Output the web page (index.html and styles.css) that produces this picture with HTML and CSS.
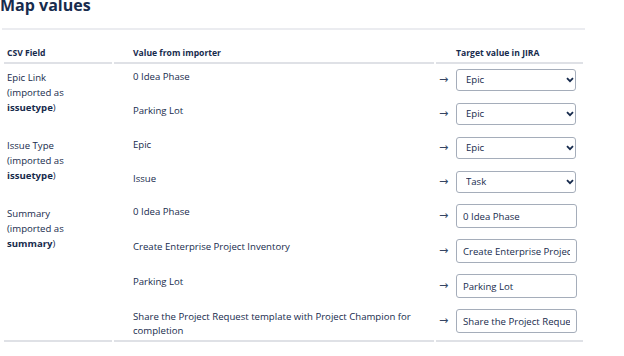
FILE: index.html
```html
<!DOCTYPE html>
<html lang="en">
<head>
    <meta charset="UTF-8">
    <title>Map values</title>
    <link rel="stylesheet" href="styles.css">
</head>
<body>
    <div class="page">
        <h1 class="title">Map values</h1>

        <table class="map">
            <colgroup>
                <col class="col-field">
                <col class="col-value">
                <col class="col-target">
            </colgroup>
            <thead>
                <tr>
                    <th>CSV Field</th>
                    <th class="th-value">Value from importer</th>
                    <th class="th-target">Target value in JIRA</th>
                </tr>
            </thead>
            <tbody>
                <!-- Epic Link -->
                <tr>
                    <td class="field" rowspan="2">Epic Link<br>(imported as<br><b>issuetype</b>)</td>
                    <td class="value">0 Idea Phase</td>
                    <td class="target">
                        <div class="map-to"><span class="arrow">&rarr;</span><span class="pick"><select><option>Epic</option></select><svg class="chev" viewBox="0 0 8 6" width="8" height="6"><path d="M1 1.2 L4 4.2 L7 1.2" fill="none" stroke="#172b4d" stroke-width="1.8"/></svg></span></div>
                    </td>
                </tr>
                <tr>
                    <td class="value">Parking Lot</td>
                    <td class="target">
                        <div class="map-to"><span class="arrow">&rarr;</span><span class="pick"><select><option>Epic</option></select><svg class="chev" viewBox="0 0 8 6" width="8" height="6"><path d="M1 1.2 L4 4.2 L7 1.2" fill="none" stroke="#172b4d" stroke-width="1.8"/></svg></span></div>
                    </td>
                </tr>

                <!-- Issue Type -->
                <tr>
                    <td class="field" rowspan="2">Issue Type<br>(imported as<br><b>issuetype</b>)</td>
                    <td class="value">Epic</td>
                    <td class="target">
                        <div class="map-to"><span class="arrow">&rarr;</span><span class="pick"><select><option>Epic</option></select><svg class="chev" viewBox="0 0 8 6" width="8" height="6"><path d="M1 1.2 L4 4.2 L7 1.2" fill="none" stroke="#172b4d" stroke-width="1.8"/></svg></span></div>
                    </td>
                </tr>
                <tr>
                    <td class="value">Issue</td>
                    <td class="target">
                        <div class="map-to"><span class="arrow">&rarr;</span><span class="pick"><select><option>Task</option></select><svg class="chev" viewBox="0 0 8 6" width="8" height="6"><path d="M1 1.2 L4 4.2 L7 1.2" fill="none" stroke="#172b4d" stroke-width="1.8"/></svg></span></div>
                    </td>
                </tr>

                <!-- Summary -->
                <tr class="text-row">
                    <td class="field last-field" rowspan="4">Summary<br>(imported as<br><b>summary</b>)</td>
                    <td class="value">0 Idea Phase</td>
                    <td class="target">
                        <div class="map-to"><span class="arrow">&rarr;</span><input class="box" type="text" value="0 Idea Phase"></div>
                    </td>
                </tr>
                <tr class="text-row">
                    <td class="value">Create Enterprise Project Inventory</td>
                    <td class="target">
                        <div class="map-to"><span class="arrow">&rarr;</span><input class="box" type="text" value="Create Enterprise Project Inventory"></div>
                    </td>
                </tr>
                <tr class="text-row">
                    <td class="value">Parking Lot</td>
                    <td class="target">
                        <div class="map-to"><span class="arrow">&rarr;</span><input class="box" type="text" value="Parking Lot"></div>
                    </td>
                </tr>
                <tr class="text-row last">
                    <td class="value">Share the Project Request template with Project Champion for completion</td>
                    <td class="target">
                        <div class="map-to"><span class="arrow">&rarr;</span><input class="box" type="text" value="Share the Project Request template with Project Champion for completion"></div>
                    </td>
                </tr>
            </tbody>
        </table>
    </div>
</body>
</html>
```

FILE: styles.css
```css
* {
    margin: 0;
    padding: 0;
    box-sizing: border-box;
}

body {
    font-family: 'Open Sans', 'Noto Sans', sans-serif;
    color: #172b4d;
    background: #fff;
}

.page {
    width: 585px;
}

.title {
    font-size: 16px;
    font-weight: 700;
    line-height: 24px;
    margin-top: -7px;
    padding-bottom: 11px;
    border-bottom: 2px solid #ebecf0;
    margin-left: 2px;
    text-indent: -2px;
}

.map {
    width: 583px;
    margin-left: 2px;
    border-collapse: separate;
    border-spacing: 2px 0;
    font-size: 9.6px;
    margin-top: 1px;
}

.col-field { width: 108px; }
.col-target { width: 147px; }

.map th {
    text-align: left;
    font-size: 8.6px;
    font-weight: 700;
    line-height: 12px;
    padding: 16px 3px 3px 3px;
    border-bottom: 2px solid #dfe1e6;
}

.map th.th-value {
    padding-left: 19px;
}

.map th.th-target {
    padding-left: 20px;
}

.map td {
    vertical-align: top;
    line-height: 14px;
}

.map .field {
    padding: 6px 3px 0;
    line-height: 15px;
}

.map .value {
    padding: 6px 3px 0 19px;
}

.map .text-row .value {
    padding-top: 5px;
}

.map .target {
    padding: 5px 0 7px 3px;
}

.map .text-row .target {
    padding-top: 4px;
}

.map tr.last td,
.map td.last-field {
    border-bottom: 2px solid #dfe1e6;
}

.map-to {
    display: flex;
    align-items: center;
    gap: 6px;
}

.arrow {
    font-family: 'DejaVu Sans', sans-serif;
    font-size: 11px;
    line-height: 12px;
    width: 11px;
    color: #344563;
}

.pick {
    position: relative;
    display: block;
}

.pick select {
    display: block;
    width: 120px;
    height: 22px;
    font: inherit;
    font-size: 9.6px;
    color: #172b4d;
    border: 1px solid #a5adba;
    border-radius: 3px;
    padding: 0 9px;
    background: #fff;
    appearance: none;
    -webkit-appearance: none;
}

.chev {
    position: absolute;
    right: 2px;
    top: 8px;
}

.box {
    display: block;
    width: 121px;
    height: 24px;
    font: inherit;
    font-size: 9.6px;
    color: #172b4d;
    border: 1px solid #a5adba;
    border-radius: 3px;
    padding: 0 6px;
    background: #fff;
}
```
